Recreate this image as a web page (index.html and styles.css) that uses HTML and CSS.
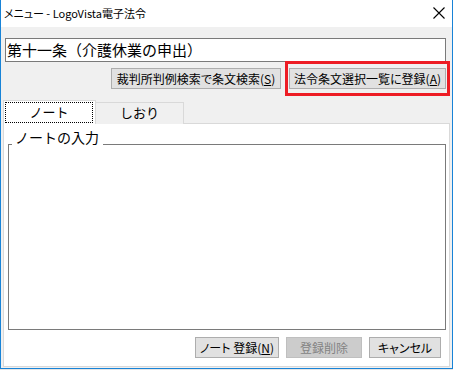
FILE: index.html
```html
<!DOCTYPE html>
<html lang="ja">
<head>
<meta charset="utf-8">
<title>メニュー - LogoVista電子法令</title>
<link rel="stylesheet" href="styles.css">
</head>
<body>
<div class="window">
  <div class="titlebar">
    <span class="title">メニュー - LogoVista電子法令</span>
    <svg class="close" width="12" height="12" viewBox="0 0 12 12"><path d="M0.5 0.5 L11.5 11.5 M11.5 0.5 L0.5 11.5" stroke="#000" stroke-width="1.1" fill="none"/></svg>
  </div>
  <div class="body">
    <div class="textbox">第十一条（介護休業の申出）</div>
    <div class="btnrow">
      <button class="btn btn-search">裁判所判例検索で条文検索(<u>S</u>)</button>
      <button class="btn btn-reg">法令条文選択一覧に登録(<u>A</u>)</button>
    </div>
    <div class="tabs">
      <div class="tab tab-active"><span class="focus">ノート</span></div>
      <div class="tab">しおり</div>
    </div>
    <div class="panel">
      <fieldset class="group">
        <legend class="legend">ノートの入力</legend>
        <div class="group-body"></div>
      </fieldset>
      <div class="bottomrow">
        <button class="btn btn-note">ノート 登録(<u>N</u>)</button>
        <button class="btn btn-del" disabled>登録削除</button>
        <button class="btn btn-cancel">キャンセル</button>
      </div>
    </div>
  </div>
  <div class="highlight"></div>
</div>
</body>
</html>
```

FILE: styles.css
```css
html, body {
  margin: 0;
  padding: 0;
  background: #e6e6e6;
}
body {
  font-family: "Noto Sans CJK JP", "Noto Sans", sans-serif;
  font-size: 12px;
  color: #000;
}
.window {
  position: relative;
  width: 453px;
  height: 369px;
  box-sizing: border-box;
  border: 1px solid #1883d7;
  border-top: 0;
  background: #f0f0f0;
  display: flex;
  flex-direction: column;
}
.titlebar {
  height: 27px;
  flex: none;
  background: #fff;
  display: flex;
  align-items: center;
  justify-content: space-between;
  padding: 0 7px 0 3px;
}
.title {
  font-size: 11px;
  line-height: 16px;
  margin-top: -1px;
  font-feature-settings: "palt";
}
.close {
  display: block;
  margin-top: -2px;
}
.body {
  flex: 1;
  display: flex;
  flex-direction: column;
  padding: 11px 2px 1px 2px;
}
.textbox {
  height: 24px;
  box-sizing: border-box;
  margin: 0 4px 0 2px;
  border: 1px solid #7a7a7a;
  background: #fff;
  font-size: 15px;
  line-height: 22px;
  padding-left: 1px;
  white-space: nowrap;
  overflow: hidden;
}
.btnrow {
  display: flex;
  justify-content: flex-end;
  gap: 8px;
  margin: 6px 4px 0 0;
}
.btn {
  height: 21px;
  box-sizing: border-box;
  border: 1px solid #adadad;
  background: #e1e1e1;
  font-family: inherit;
  font-size: 12px;
  line-height: 17px;
  padding: 0;
  color: #000;
  font-feature-settings: "palt";
  white-space: nowrap;
}
.btn u {
  text-underline-offset: 1px;
}
.btn-search { width: 170px; }
.btn-reg { width: 157px; }
.tabs {
  display: flex;
  align-items: flex-start;
  margin-top: 11px;
  height: 23px;
  position: relative;
  z-index: 1;
}
.tab {
  box-sizing: border-box;
  height: 22px;
  margin-top: 2px;
  width: 89px;
  margin-left: -1px;
  border: 1px solid #d9d9d9;
  border-bottom: 0;
  background: #f0f0f0;
  font-size: 13px;
  line-height: 20px;
  text-align: center;
}
.tab-active {
  margin: 0;
  width: 93px;
  height: 24px;
  background: #fff;
  padding: 1px 2px 1px 1px;
  display: flex;
}
.focus {
  flex: 1;
  outline: 1px dotted #000;
  outline-offset: -1px;
  line-height: 20px;
}
.panel {
  flex: 1;
  background: #fff;
  border: 1px solid #d9d9d9;
  display: flex;
  flex-direction: column;
}
.group {
  margin: 6px 3px 0 4px;
  padding: 0;
  border: 1px solid #7a7a7a;
  min-width: 0;
}
.legend {
  margin-left: 3px;
  padding: 0 4px 14px 3px;
  font-size: 14px;
  line-height: 14px;
  height: 28px;
  box-sizing: border-box;
}
.group-body {
  height: 171px;
}
.bottomrow {
  display: flex;
  justify-content: flex-end;
  gap: 7px;
  margin: 7px 8px 0 0;
}
.btn-note { width: 84px; }
.btn-del {
  width: 76px;
  background: #cccccc;
  border-color: #bfbfbf;
  color: #838383;
}
.btn-cancel { width: 72px; }
.highlight {
  position: absolute;
  left: 284px;
  top: 61px;
  width: 165px;
  height: 35px;
  box-sizing: border-box;
  border: 3px solid #ed1c24;
}
```
